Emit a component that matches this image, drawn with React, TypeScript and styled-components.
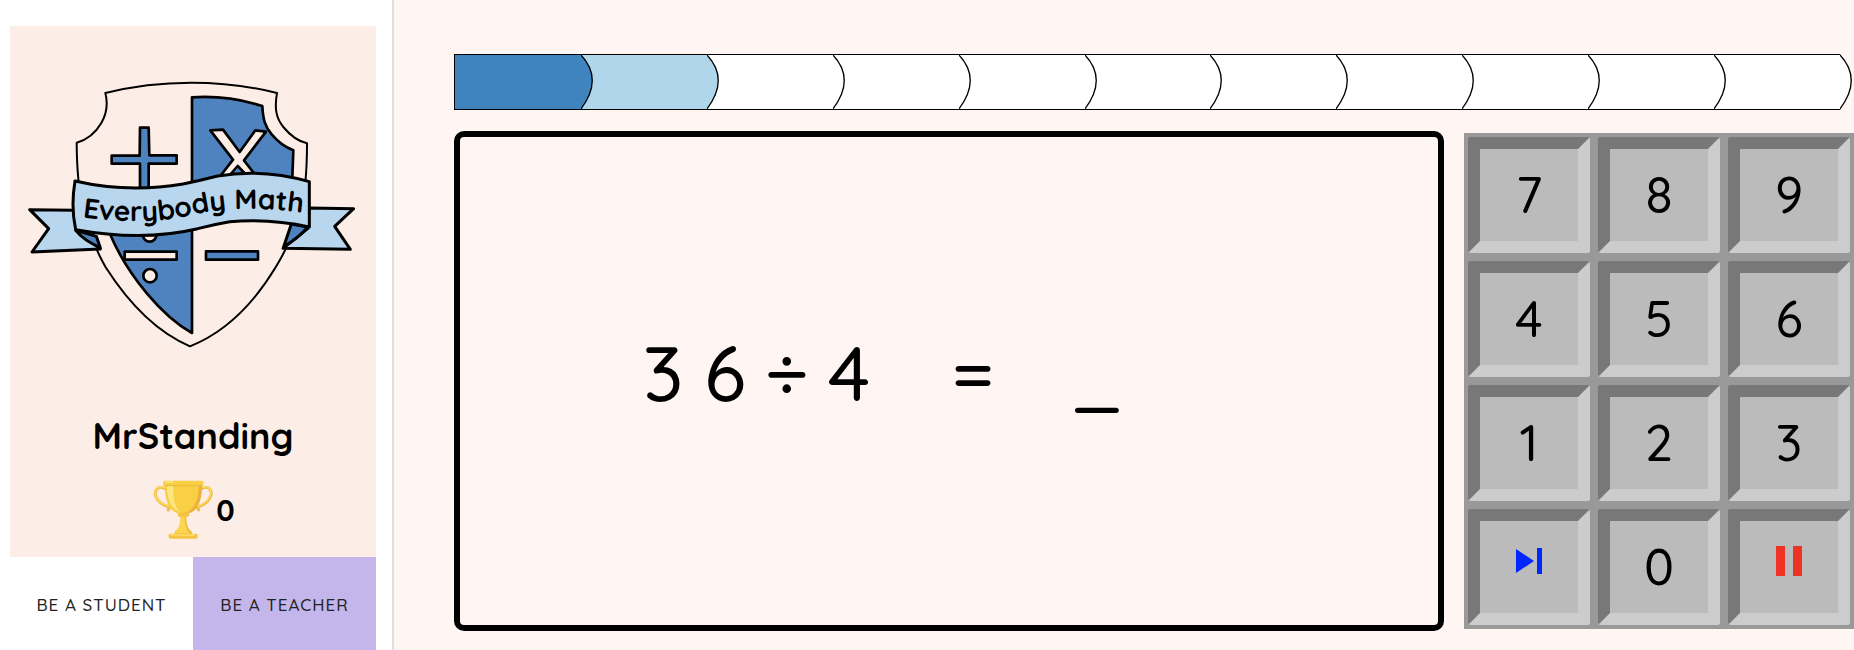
import React from "react";
import styled, { createGlobalStyle } from "styled-components";

const GlobalStyle = createGlobalStyle`
  *, *::before, *::after { box-sizing: border-box; }
  body {
    margin: 0;
    background: #fff5f2;
    color: #000;
    font-family: Quicksand, Lato, "Open Sans", sans-serif;
  }
`;

const Page = styled.div`
  display: flex;
  min-height: 100vh;
`;

const Sidebar = styled.aside`
  flex: none;
  width: 394px;
  display: flex;
  flex-direction: column;
  padding: 26px 16px 0 10px;
  background: #fff;
  border-right: 2px solid #dedfe3;
`;

const ProfileCard = styled.section`
  display: flex;
  flex-direction: column;
  align-items: center;
  padding: 54px 0 18px;
  background: #fceee6;
`;

const UserName = styled.h1`
  margin: 64px 0 20px;
  font-size: 36px;
  line-height: 48px;
  font-weight: 700;
`;

const Score = styled.div`
  display: flex;
  align-items: center;
  gap: 3px;
  padding-left: 2px;
  font-size: 30px;
  line-height: 36px;
  font-weight: 700;
`;

const RoleTabs = styled.div`
  flex: 1;
  display: grid;
  grid-template-columns: 1fr 1fr;
  min-height: 93px;
`;

const RoleButton = styled.button<{ $accent?: boolean }>`
  border: 0;
  padding: 2px 0 0;
  background: ${(p) => (p.$accent ? "#c4b5ea" : "#fff")};
  color: #222;
  font: inherit;
  font-size: 17px;
  font-weight: 500;
  letter-spacing: 1px;
  cursor: pointer;
`;

const Main = styled.main`
  flex: 1;
  min-width: 0;
  display: flex;
  flex-direction: column;
  gap: 21px;
  padding: 54px 0 19px 60px;
`;

const Progress = styled.div`
  display: flex;
  height: 56px;
  margin-right: 14px;
  border-left: 1px solid #000;
  isolation: isolate;
`;

const Step = styled.div<{ $fill: string; $layer: number }>`
  position: relative;
  z-index: ${(p) => p.$layer};
  flex: 1;
  border: solid #000;
  border-width: 1px 0;
  background: ${(p) => p.$fill};
`;

const StepCap = styled.svg`
  position: absolute;
  top: -1px;
  left: 100%;
  width: 14px;
  height: 56px;
`;

const Workspace = styled.div`
  display: flex;
  align-items: center;
  gap: 20px;
`;

const Board = styled.section`
  flex: 1;
  min-height: 500px;
  display: flex;
  align-items: center;
  justify-content: center;
  padding: 0 14px 18px 0;
  border: 6px solid #000;
  border-radius: 10px;
`;

const Equation = styled.div`
  display: grid;
  grid-template-columns: repeat(10, 62px);
  font-size: 77px;
  line-height: 90px;
  font-weight: 500;
  text-align: center;
`;

const Keypad = styled.div`
  flex: none;
  display: grid;
  grid-template-columns: repeat(3, 122px);
  grid-auto-rows: 116px;
  gap: 8px;
  padding: 4px;
  background: #999;
`;

const Key = styled.button`
  display: flex;
  align-items: center;
  justify-content: center;
  padding: 0;
  border: 12px solid;
  border-color: #787878 #ccc #ccc #787878;
  border-radius: 3px;
  background: #bbb;
  color: #000;
  font: inherit;
  font-size: 50px;
  line-height: 60px;
  font-weight: 500;
  cursor: pointer;
`;

const KeyIcon = styled.svg`
  width: 28px;
  height: 32px;
  margin-bottom: 12px;
`;

const Logo = () => (
  <svg width="328" height="268" viewBox="88 60 984 804" role="img" aria-label="Everybody Math"
    overflow="visible" stroke="#000" strokeLinejoin="round" strokeLinecap="round">
    <path fill="#fceee6" strokeWidth="6" d="M317 99Q440 68 575 68Q710 68 832 99C824 145 829 174 851 201C873 228 897 244 922 250C922 430 900 500 828 622Q720 800 571 859Q432 800 318 622C250 500 232 400 231 248C257 241 285 223 305 189C323 158 325 130 317 99Z" />
    <g fill="#4f83bf" strokeWidth="8">
      <path d="M577 112Q685 105 788 138C790 178 796 200 816 223C836 247 856 261 881 271L877 380L577 380Z" />
      <path d="M330 520L577 500V819C490 770 385 650 330 520Z" />
      <path d="M421 203H447L449 286H531V311H447V400H421V311H336V287H420Z" />
      <path d="M619 574H775V599H619Z" />
    </g>
    <g fill="#fceee6" strokeWidth="8">
      <path d="M632 211L670 209L720 276L767 211L799 215L733 301L767 345H740L714 318L688 348H662L700 299Z" />
      <path d="M375 575H531V599H375Z" />
      <circle cx="451" cy="647" r="20" />
      <circle cx="450" cy="525" r="20" />
    </g>
    <g strokeWidth="9">
      <path fill="#b8d7ef" d="M90 449L222 451L235 515L302 567L97 576L147 506Z" />
      <path fill="#b8d7ef" d="M928 444L1062 446L1005 499L1052 568L850 565L925 505Z" />
      <path fill="#4f83bf" d="M228 511L290 529L302 563Q252 541 228 511Z" />
      <path fill="#4f83bf" d="M875 492L925 501Q895 535 852 560Z" />
      <path fill="#b8d7ef" d="M226 363Q385 400 550 372Q603 361 654 348Q790 325 929 365V501Q810 475 690 485Q642 493 594 506Q430 545 228 509Q213 440 226 363Z" />
    </g>
    <path id="ribbon-line" fill="none" stroke="none" d="M248 472Q430 497 560 469Q720 429 940 463" />
    <text fill="#000" stroke="none" fontSize="84" fontWeight="700">
      <textPath href="#ribbon-line">Everybody Math</textPath>
    </text>
  </svg>
);

const Trophy = () => (
  <svg width="60" height="59" viewBox="460 238 180 177" aria-hidden="true">
    <g fill="none" stroke="#f2bd45" strokeWidth="9" strokeLinecap="round">
      <path d="M496 264C474 252 463 270 468 286C474 304 490 314 513 321M508 316L506 328" />
      <path d="M606 264C626 252 639 270 633 286C627 304 612 314 589 321M593 316L597 328" />
    </g>
    <g fill="none" stroke="#fbdc63" strokeWidth="4" strokeLinecap="round">
      <path d="M494 261C474 252 463 268 467 284C473 302 488 311 508 317" />
      <path d="M608 261C626 252 636 268 632 284C626 302 612 311 593 317" />
    </g>
    <path fill="#f9d043" d="M495 250H607C607 302 592 335 564 338H538C510 335 495 302 495 250Z" />
    <path fill="#edb13e" d="M597 252H607C607 302 592 335 564 338H551C585 329 597 298 597 252Z" />
    <path fill="#fde581" d="M502 254H520C520 296 526 319 541 334C514 324 502 296 502 254Z" />
    <rect x="490" y="240" width="122" height="15" rx="6" fill="#f9d043" />
    <path d="M492 255H610" stroke="#e2ab3d" strokeWidth="2" />
    <path d="M498 244H520" stroke="#fde581" strokeWidth="5" />
    <path fill="#f3bd40" d="M543 346H560C560 374 564 382 577 394V402H525V394C538 382 543 374 543 346Z" />
    <path fill="#fbd650" d="M543 346H555C555 374 558 384 569 398H527V394C538 382 543 374 543 346Z" />
    <rect x="534" y="336" width="35" height="12" rx="5" fill="#f4c344" />
    <rect x="507" y="399" width="87" height="15" rx="5" fill="#f5c442" />
    <path d="M512 403H586" stroke="#fbdc63" strokeWidth="5" />
  </svg>
);

const STEP_COUNT = 11;
const stepFill = (i: number) => (i === 0 ? "#4084bf" : i === 1 ? "#b0d6ec" : "#fff");

const TOKENS = ["3", "6", "÷", "4", "", "=", "", "_"];

export default function App() {
  return (
    <Page>
      <GlobalStyle />
      <Sidebar>
        <ProfileCard>
          <Logo />
          <UserName>MrStanding</UserName>
          <Score>
            <Trophy />
            <span>0</span>
          </Score>
        </ProfileCard>
        <RoleTabs>
          <RoleButton type="button">BE A STUDENT</RoleButton>
          <RoleButton type="button" $accent>BE A TEACHER</RoleButton>
        </RoleTabs>
      </Sidebar>
      <Main>
        <Progress role="progressbar" aria-valuemin={0} aria-valuemax={STEP_COUNT} aria-valuenow={1} aria-label="Progress">
          {Array.from({ length: STEP_COUNT }, (_, i) => (
            <Step key={i} $fill={stepFill(i)} $layer={STEP_COUNT - i}>
              <StepCap viewBox="0 0 14 56">
                <path d="M-0.5 0.5Q23 25 -0.5 55.5" fill={stepFill(i)} stroke="#000" strokeWidth="1.3" />
              </StepCap>
            </Step>
          ))}
        </Progress>
        <Workspace>
          <Board>
            <Equation>
              {TOKENS.map((t, i) => (
                <span key={i}>{t}</span>
              ))}
            </Equation>
          </Board>
          <Keypad>
            {["7", "8", "9", "4", "5", "6", "1", "2", "3"].map((n) => (
              <Key key={n} type="button">{n}</Key>
            ))}
            <Key type="button" aria-label="Skip">
              <KeyIcon viewBox="0 0 28 32" fill="#0026ff">
                <path d="M1 4L19 16L1 28ZM22 3H27V29H22Z" />
              </KeyIcon>
            </Key>
            <Key type="button">0</Key>
            <Key type="button" aria-label="Pause">
              <KeyIcon viewBox="0 0 28 32" fill="#ee3224">
                <path d="M1 1H10V31H1ZM18 1H27V31H18Z" />
              </KeyIcon>
            </Key>
          </Keypad>
        </Workspace>
      </Main>
    </Page>
  );
}
